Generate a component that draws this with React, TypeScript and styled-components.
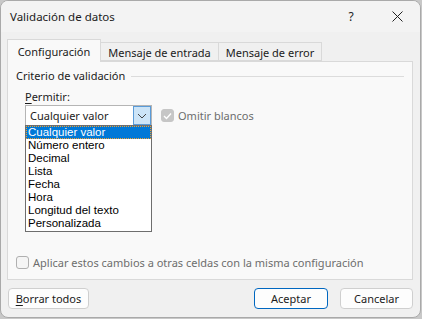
import React from "react";
import styled, { createGlobalStyle } from "styled-components";

const Global = createGlobalStyle`
  html, body { margin: 0; padding: 0; background: #c8c8c8; }
  body { font-family: "Noto Sans", "Open Sans", sans-serif; font-size: 11px; color: #1b1b1b; }
  * { box-sizing: border-box; }
`;

const Window = styled.div`
  width: 421px;
  height: 318px;
  background: #f0f0f0;
  border: 1px solid #a9a9a9;
  border-radius: 8px;
  overflow: hidden;
  display: flex;
  flex-direction: column;
`;

const TitleBar = styled.div`
  height: 31px;
  background: #f3f3f3;
  display: flex;
  align-items: center;
  padding-left: 9px;
`;

const Title = styled.div`
  flex: 1;
  font-size: 11.5px;
  color: #1a1a1a;
`;

const TitleButton = styled.div`
  width: 46px;
  height: 31px;
  display: flex;
  align-items: center;
  justify-content: center;
  font-size: 12px;
  color: #222;
`;

const Body = styled.div`
  flex: 1;
  display: flex;
  flex-direction: column;
  padding: 7px 7px 0 6px;
`;

const Tabs = styled.div`
  display: flex;
  align-items: flex-end;
  height: 22px;
  position: relative;
  z-index: 1;
`;

const Tab = styled.div<{ $active?: boolean; $w: number }>`
  width: ${(p) => p.$w}px;
  height: ${(p) => (p.$active ? 23 : 19)}px;
  display: flex;
  align-items: center;
  justify-content: center;
  background: ${(p) => (p.$active ? "#f9f9f9" : "#f0f0f0")};
  border: 1px solid #d9d9d9;
  border-bottom: ${(p) => (p.$active ? "none" : "1px solid #d9d9d9")};
  margin-left: ${(p) => (p.$active ? 0 : -1)}px;
  margin-bottom: ${(p) => (p.$active ? -1 : 0)}px;
  color: #1b1b1b;
  font-size: 11px;
  padding-top: ${(p) => (p.$active ? 0 : 1)}px;
`;

const Panel = styled.div`
  height: 219px;
  background: #f9f9f9;
  border: 1px solid #d9d9d9;
  display: flex;
  flex-direction: column;
  padding: 6px 8px 0 8px;
`;

const GroupHeader = styled.div`
  display: flex;
  align-items: center;
  gap: 6px;
  color: #1b1b1b;
  &::after {
    content: "";
    flex: 1;
    height: 1px;
    background: #dcdcdc;
    margin-top: 2px;
  }
`;

const Group = styled.div`
  padding-left: 9px;
  display: flex;
  flex-direction: column;
`;

const Label = styled.div`
  margin-top: 6px;
  line-height: 16px;
  u { text-decoration-thickness: 1px; text-underline-offset: 2px; }
`;

const ComboRow = styled.div`
  display: flex;
  align-items: flex-start;
  gap: 9px;
`;

const ComboWrap = styled.div`
  width: 127px;
  display: flex;
  flex-direction: column;
`;

const Combo = styled.div`
  height: 20px;
  border: 1px solid #b5b5b5;
  border-bottom: none;
  background: #fff;
  display: flex;
  align-items: stretch;
`;

const ComboText = styled.div`
  flex: 1;
  padding-left: 4px;
  display: flex;
  align-items: center;
`;

const ComboButton = styled.div`
  width: 18px;
  background: #cce4f7;
  border: 1px solid #5a9bd8;
  display: flex;
  align-items: center;
  justify-content: center;
`;

const List = styled.div`
  border: 1px solid #6e6e6e;
  background: #fff;
  padding: 0 0 1px 0;
  display: flex;
  flex-direction: column;
`;

const Item = styled.div<{ $selected?: boolean }>`
  height: 13px;
  line-height: 13px;
  padding-left: 2px;
  font-family: "Liberation Sans", Arial, sans-serif;
  font-size: 11.5px;
  color: ${(p) => (p.$selected ? "#fff" : "#000")};
  background: ${(p) => (p.$selected ? "#0078d7" : "transparent")};
  outline: ${(p) => (p.$selected ? "1px dotted #f0a030" : "none")};
  outline-offset: -1px;
  white-space: nowrap;
  overflow: hidden;
`;

const CheckRow = styled.div<{ $disabled?: boolean; $top?: number }>`
  display: flex;
  align-items: center;
  gap: 4px;
  margin-top: ${(p) => p.$top ?? 0}px;
  color: ${(p) => (p.$disabled ? "#6d6d6d" : "#1b1b1b")};
`;

const Box = styled.div<{ $checked?: boolean }>`
  width: 13px;
  height: 13px;
  border-radius: 3px;
  border: 1px solid ${(p) => (p.$checked ? "#c6c6c6" : "#b0b0b0")};
  background: ${(p) => (p.$checked ? "#c6c6c6" : "#f5f5f5")};
  display: flex;
  align-items: center;
  justify-content: center;
`;

const Spacer = styled.div`
  flex: 1;
`;

const BottomCheck = styled.div`
  padding-bottom: 9px;
`;

const Footer = styled.div`
  flex: 1;
  display: flex;
  align-items: center;
  padding: 0 0 0 1px;
  gap: 12px;
`;

const Button = styled.div<{ $primary?: boolean; $w: number }>`
  width: ${(p) => p.$w}px;
  height: 21px;
  border-radius: 4px;
  background: #fdfdfd;
  border: 1px solid ${(p) => (p.$primary ? "#0067c0" : "#cfcfcf")};
  display: flex;
  align-items: center;
  justify-content: center;
  color: #1b1b1b;
  u { text-decoration-thickness: 1px; text-underline-offset: 2px; }
`;

const Chevron = () => (
  <svg width="10" height="6" viewBox="0 0 10 6">
    <path d="M1 1 L5 5 L9 1" fill="none" stroke="#444" strokeWidth="1" />
  </svg>
);

const Check = () => (
  <svg width="9" height="8" viewBox="0 0 9 8">
    <path d="M1 4 L3.5 6.5 L8 1.5" fill="none" stroke="#fff" strokeWidth="1.4" />
  </svg>
);

const items = [
  "Cualquier valor",
  "Número entero",
  "Decimal",
  "Lista",
  "Fecha",
  "Hora",
  "Longitud del texto",
  "Personalizada",
];

export default function App() {
  return (
    <>
      <Global />
      <Window>
        <TitleBar>
          <Title>Validación de datos</Title>
          <TitleButton>?</TitleButton>
          <TitleButton>
            <svg width="11" height="11" viewBox="0 0 11 11">
              <path d="M0.5 0.5 L10.5 10.5 M10.5 0.5 L0.5 10.5" stroke="#222" strokeWidth="1" />
            </svg>
          </TitleButton>
        </TitleBar>
        <Body>
          <Tabs>
            <Tab $active $w={94}>Configuración</Tab>
            <Tab $w={119}>Mensaje de entrada</Tab>
            <Tab $w={104}>Mensaje de error</Tab>
          </Tabs>
          <Panel>
            <GroupHeader>Criterio de validación</GroupHeader>
            <Group>
              <Label>
                <u>P</u>ermitir:
              </Label>
              <ComboRow>
                <ComboWrap>
                  <Combo>
                    <ComboText>Cualquier valor</ComboText>
                    <ComboButton>
                      <Chevron />
                    </ComboButton>
                  </Combo>
                  <List>
                    {items.map((t, i) => (
                      <Item key={t} $selected={i === 0}>
                        {t}
                      </Item>
                    ))}
                  </List>
                </ComboWrap>
                <CheckRow $disabled $top={3}>
                  <Box $checked>
                    <Check />
                  </Box>
                  Omitir blancos
                </CheckRow>
              </ComboRow>
            </Group>
            <Spacer />
            <BottomCheck>
              <CheckRow $disabled>
                <Box />
                Aplicar estos cambios a otras celdas con la misma configuración
              </CheckRow>
            </BottomCheck>
          </Panel>
          <Footer>
            <Button $w={81}>
              <span>
                <u>B</u>orrar todos
              </span>
            </Button>
            <Spacer />
            <Button $w={74} $primary>
              Aceptar
            </Button>
            <Button $w={73}>Cancelar</Button>
          </Footer>
        </Body>
      </Window>
    </>
  );
}
